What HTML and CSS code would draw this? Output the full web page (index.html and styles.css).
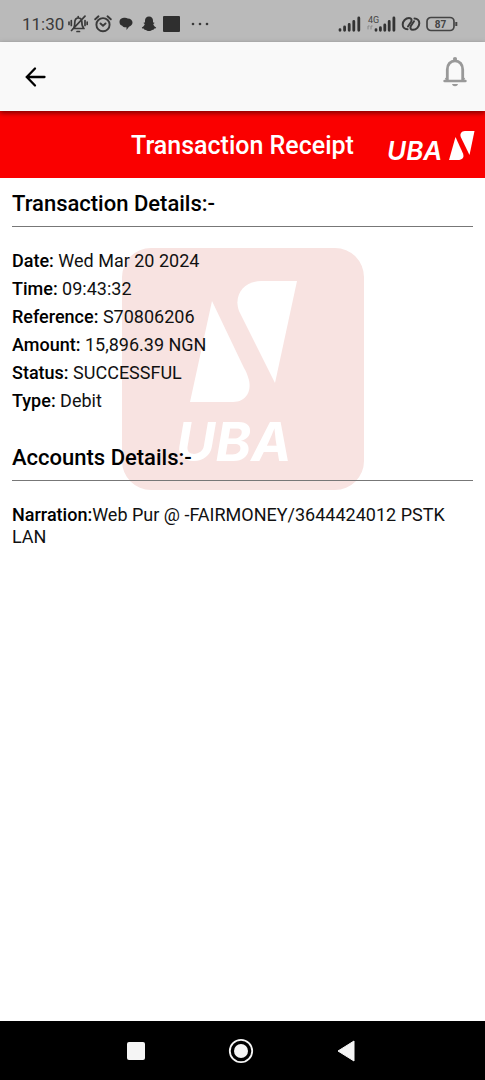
FILE: index.html
```html
<!DOCTYPE html>
<html lang="en">
<head>
<meta charset="utf-8">
<meta name="viewport" content="width=device-width, initial-scale=1">
<title>Transaction Receipt</title>
<link rel="stylesheet" href="styles.css">
</head>
<body>
<div class="screen">
  <div class="status-bar">
    <div class="status-group">
      <span class="clock">11:30</span>
      <svg class="muted" width="20" height="18" viewBox="0 0 20 18" fill="none" stroke="#3a3a3a" stroke-width="1.700" stroke-linecap="round">
        <path d="M5 13.500h11M5.800 12.500c1-1 1-3 1-5 0-3 1.300-4.500 3.500-4.500s3.600 1.500 3.600 4.500c0 2 .2 4 1.500 5M9 16.500h2.500M10.200 1.500V3M3.300 5.500v5M1 7v2.400M17 5.500v5M19.200 7v2.400M17 1.200L3.500 15.500"/>
      </svg>
      <svg class="alarm" width="18" height="18" viewBox="0 0 18 18" fill="none" stroke="#3a3a3a" stroke-width="1.900" stroke-linecap="round">
        <circle cx="9" cy="9.700" r="6.600"/><path d="M1.200 4.300L4.500 1.300M16.800 4.300l-3.300-3M6.500 8.500L9 10.700l2.500-2.200"/>
      </svg>
      <svg class="chat" width="14" height="18" viewBox="0 0 14 18" fill="#2f2f2f">
        <path d="M.5 7C.5 4 3 2.800 6 2.800c1 0 2 .2 2.700.6 3 0 4.800 1.700 4.800 4.200 0 2-1.500 3.600-3.500 4.100L7.500 15v-2.800C5.500 12.500 4 11.800 3.300 10.700 1.500 10.300.5 9 .5 7z"/>
      </svg>
      <svg class="ghost" width="16" height="18" viewBox="0 0 16 18" fill="#2f2f2f">
        <path d="M8 1.500c-2.600 0-4 1.800-4 4.200v1.700l-1.300.1.100 1 1 .6C3.300 11 2 12 .8 12.500c.2 1 1.200 1 2.200 1.200l.4 1c1.800-.3 2.600 1.300 4.600 1.300s2.800-1.600 4.600-1.300l.4-1c1-.2 2-.2 2.200-1.200-1.200-.5-2.500-1.500-3-3.400l1-.6.1-1-1.300-.1V5.700c0-2.400-1.400-4.200-4-4.200z"/>
      </svg>
      <svg width="17" height="18" viewBox="0 0 17 18"><rect y="1" width="17" height="16" rx="1" fill="#2f2f2f"/></svg>
      <svg class="more" width="18" height="18" viewBox="0 0 18 18" fill="#3a3a3a"><circle cx="2" cy="9" r="1.300"/><circle cx="9" cy="9" r="1.300"/><circle cx="16" cy="9" r="1.300"/></svg>
    </div>
    <div class="status-group status-right">
      <svg width="23" height="18" viewBox="0 0 23 18" fill="none" stroke="#333" stroke-width="2.800" stroke-linecap="round">
        <path d="M2 15.300v-.6M6.600 15.300V12M11.200 15.300V9.500M15.800 15.300V6.500M20.800 15.300V3"/>
      </svg>
      <svg class="signal-data" width="30" height="18" viewBox="0 0 30 18" fill="none" stroke="#333" stroke-width="2.800" stroke-linecap="round">
        <text x="2" y="8" class="network">4G</text>
        <path d="M10 15.300v-.6M14.400 15.300v-2.600M18.800 15.300V10M23.200 15.300V6.500M27.900 15.300V3"/>
        <path d="M2 14v-3h1.200M5 14v-3h1.200" stroke="#888" stroke-width="1"/>
      </svg>
      <svg width="20" height="18" viewBox="0 0 20 18" fill="none" stroke="#3a3a3a" stroke-width="2" stroke-linecap="round">
        <path d="M6.500 14.300C3.500 14.300 1.700 12 1.700 9.500c0-3.500 3-6.500 6.300-6.500 2.500 0 3.200 2 2 4L7 11.500"/>
        <path d="M13.500 3.500c3 0 4.800 2.300 4.800 4.800 0 3.500-3 6.500-6.300 6.500-2.500 0-3.200-2-2-4l3-4.500"/>
      </svg>
      <svg width="32" height="18" viewBox="0 0 32 18" fill="none" stroke="#444" stroke-width="1.700">
        <rect x="1" y="2.500" width="27" height="13" rx="4"/><path d="M30.300 7v4" stroke-width="2"/>
        <text x="14.500" y="13" class="battery" text-anchor="middle">87</text>
      </svg>
    </div>
  </div>

  <header class="app-bar">
    <button class="icon-button" type="button" aria-label="Back">
      <svg width="22" height="22" viewBox="0 0 22 22" fill="none" stroke="#000" stroke-width="2.300" stroke-linecap="round">
        <path d="M20.500 11H3M11 2.500L2.800 11l8.200 8.500"/>
      </svg>
    </button>
    <button class="icon-button bell" type="button" aria-label="Notifications">
      <svg width="26" height="32" viewBox="0 0 26 32" fill="none" stroke="#999" stroke-width="2.800">
        <path d="M5.300 24V13.500c0-5 3.200-8.700 7.700-8.700s7.700 3.700 7.700 8.700V24"/>
        <path d="M2.600 25h20.800" stroke-linecap="round" stroke-width="2.600"/>
        <path d="M3.500 23.500l2-2M22.500 23.500l-2-2" stroke-width="2"/>
        <circle cx="13" cy="3" r="2.100" fill="#999" stroke="none"/>
        <path d="M10 28h6c-.4 1.500-1.500 2.200-3 2.200s-2.600-.7-3-2.200z" fill="#999" stroke="none"/>
      </svg>
    </button>
  </header>

  <div class="banner">
    <h1>Transaction Receipt</h1>
    <svg class="brand" width="90" height="44" viewBox="0 0 90 44" fill="#fff" role="img" aria-label="UBA">
      <text x="1" y="36" class="brand-text">UBA</text>
      <path d="M69.500 13L63 36h8.500c5 0 7-2.500 5.500-6.500z"/>
      <path d="M88.500 7H79c-3.800 0-5.600 3-4 6.500l8.500 17.500z"/>
    </svg>
  </div>

  <main class="receipt">
    <svg class="watermark" width="242" height="242" viewBox="0 0 242 242" aria-hidden="true">
      <rect width="242" height="242" rx="29" fill="#f8e3e1"/>
      <g fill="#fff">
        <path d="M90 53L68 154h43c13 0 20-11 15-25-1-3-2-6-4-9z"/>
        <path d="M175 33h-36c-16 0-28 13-22 30l36 72z"/>
        <text x="54" y="213" class="watermark-text">UBA</text>
      </g>
    </svg>
    <section>
      <h2>Transaction Details:-</h2>
      <dl>
        <div><dt>Date:</dt> <dd>Wed Mar 20 2024</dd></div>
        <div><dt>Time:</dt> <dd>09:43:32</dd></div>
        <div><dt>Reference:</dt> <dd>S70806206</dd></div>
        <div><dt>Amount:</dt> <dd>15,896.39 NGN</dd></div>
        <div><dt>Status:</dt> <dd>SUCCESSFUL</dd></div>
        <div><dt>Type:</dt> <dd>Debit</dd></div>
      </dl>
    </section>
    <section>
      <h2>Accounts Details:-</h2>
      <dl>
        <div><dt>Narration:</dt><dd>Web Pur @ -FAIRMONEY/3644424012 PSTK LAN</dd></div>
      </dl>
    </section>
  </main>

  <nav class="system-nav">
    <button type="button" aria-label="Recent apps"><svg width="26" height="26" viewBox="0 0 26 26"><rect x="4" y="4" width="18" height="18" rx="2" fill="#f5f5f5"/></svg></button>
    <button type="button" aria-label="Home"><svg width="26" height="26" viewBox="0 0 26 26"><circle cx="13" cy="13" r="11.200" fill="none" stroke="#f5f5f5" stroke-width="1.800"/><circle cx="13" cy="13" r="7" fill="#f5f5f5"/></svg></button>
    <button type="button" aria-label="Back"><svg width="26" height="26" viewBox="0 0 26 26"><path d="M5 13L21 3v20z" fill="#f5f5f5" stroke="#f5f5f5" stroke-linejoin="round"/></svg></button>
  </nav>
</div>
</body>
</html>
```
FILE: styles.css
```css
* { box-sizing: border-box; }
body, h1, h2, dl, dd { margin: 0; }
body {
  font-family: Roboto, "Liberation Sans", sans-serif;
  font-size: 18px;
  line-height: 22px;
  color: #111;
  background: #fff;
}
svg { display: block; flex: none; }
button {
  border: 0;
  padding: 0;
  background: none;
  display: flex;
}
.screen {
  min-height: 100vh;
  display: flex;
  flex-direction: column;
}

.status-bar {
  background: #bababa;
  padding: 13px 27px 7px 22px;
  display: flex;
  justify-content: space-between;
  align-items: center;
}
.status-group {
  display: flex;
  align-items: center;
  gap: 6px;
}
.clock { font-size: 17px; color: #3a3a3a; }
.muted { margin-left: -2px; }
.chat { margin-left: 1px; }
.ghost { margin-left: 2px; }
.more { margin-left: 5px; }
.status-right { gap: 5px; }
.network, .battery {
  fill: #444;
  stroke: none;
  font-size: 9px;
}
.battery { font-size: 10px; font-weight: 700; }

.app-bar {
  position: relative;
  background: #f9f9f9;
  padding: 14px 17px 23px 24px;
  display: flex;
  align-items: center;
  justify-content: space-between;
  box-shadow: 0 2px 5px rgba(0, 0, 0, 0.5);
}
.app-bar .icon-button:first-child { padding-top: 9px; }

.banner {
  background: #fa0000;
  color: #fff;
  height: 67px;
  padding: 2px 9px 0;
  display: grid;
  grid-template-columns: 1fr auto 1fr;
  align-items: center;
}
.banner h1 {
  grid-column: 2;
  font-size: 25px;
  line-height: 30px;
  font-weight: 500;
}
.brand { justify-self: end; }
.brand-text {
  font: italic 600 26px Inter, "Open Sans", sans-serif;
}

.receipt {
  position: relative;
  flex: 1;
  padding: 12px 12px 24px;
}
.watermark {
  position: absolute;
  top: 70px;
  left: 0;
  right: 0;
  margin: 0 auto;
  z-index: -1;
}
.watermark-text {
  font: italic 700 54px Inter, "Open Sans", sans-serif;
}
.receipt section + section { margin-top: 32px; }
h2 {
  font-size: 22px;
  line-height: 28px;
  font-weight: 500;
  color: #000;
  padding-bottom: 8px;
  border-bottom: 1px solid #777;
}
dl {
  margin-top: 23px;
  display: flex;
  flex-direction: column;
  gap: 6px;
}
dt, dd { display: inline; }
dt { font-weight: 500; color: #000; }

.system-nav {
  background: #000;
  height: 59px;
  padding-right: 4px;
  display: flex;
  align-items: center;
  justify-content: center;
  gap: 79px;
}
```
